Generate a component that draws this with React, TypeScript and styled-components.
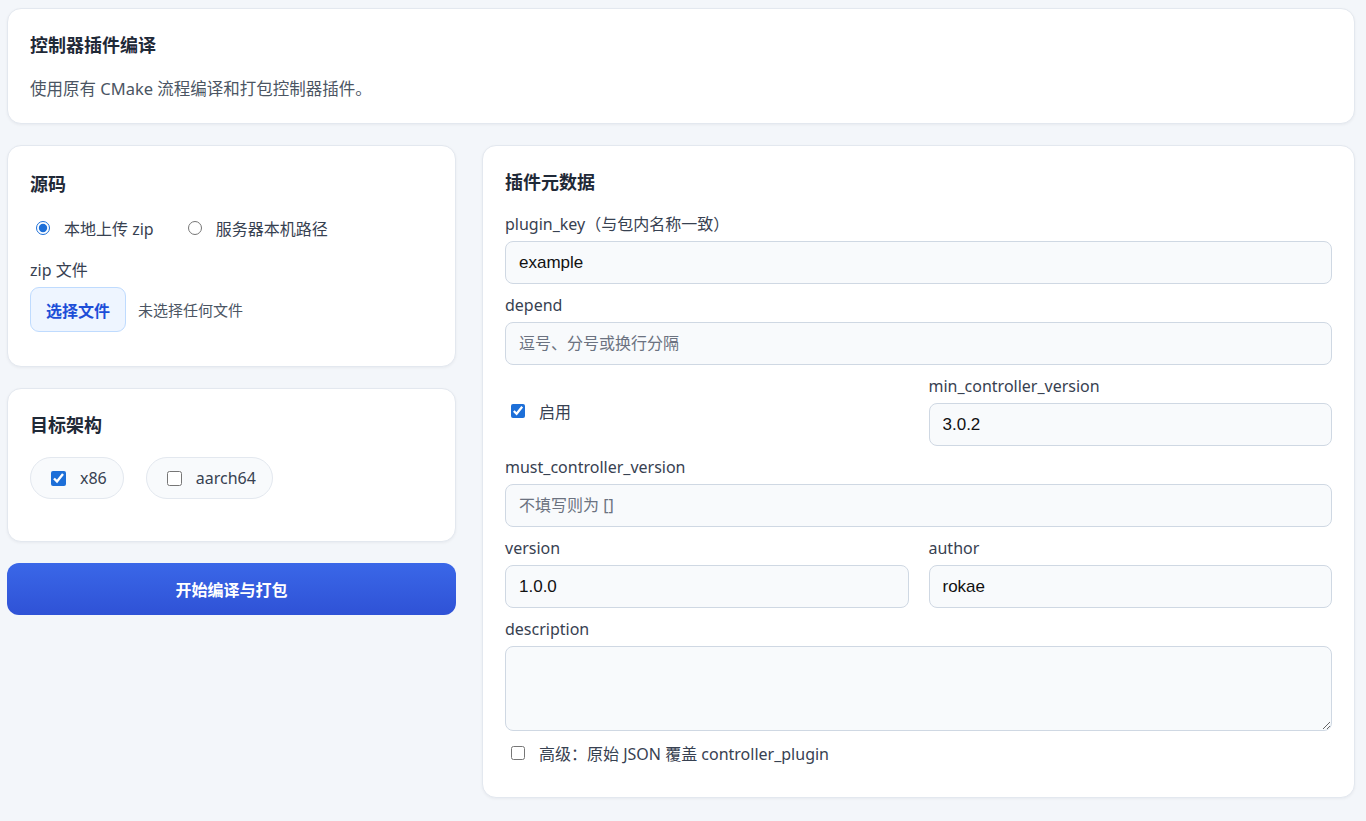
import React from "react";
import styled, { createGlobalStyle } from "styled-components";

const Global = createGlobalStyle`
  body { margin: 0; background: #f3f6fa; font-family: "Noto Sans", "Noto Sans CJK SC", sans-serif; color: #1f2937; }
  * { box-sizing: border-box; }
`;
const Page = styled.div`
  padding: 8px 11px 10px 7px; display: flex; flex-direction: column; gap: 21px; min-height: 821px;
`;
const Card = styled.div<{ $pad?: string }>`
  background: #fff; border: 1px solid #e3e8ef; border-radius: 14px;
  box-shadow: 0 1px 3px rgba(15,23,42,0.05); padding: ${p => p.$pad || "22px"};
`;
const Title = styled.div`
  font-size: 18px; font-weight: 700; color: #1f2937; line-height: 24px;
`;
const Sub = styled.div`
  font-size: 16.5px; color: #4b5563; margin-top: 20px; line-height: 24px;
`;
const Main = styled.div`
  display: grid; grid-template-columns: 449px 1fr; gap: 26px; align-items: start;
`;
const Col = styled.div` display: flex; flex-direction: column; gap: 21px; `;
const Row = styled.div<{ $gap?: number; $mt?: number }>`
  display: flex; align-items: center; gap: ${p => p.$gap ?? 12}px; margin-top: ${p => p.$mt ?? 0}px;
`;
const Opt = styled.label`
  display: flex; align-items: center; gap: 14px; font-size: 16px; color: #374151; padding-left: 6px;
  input { margin: 0; width: 14px; height: 14px; accent-color: #1d6fd8; }
`;
const Label = styled.div<{ $mt?: number }>`
  font-size: 16px; color: #374151; line-height: 21px; margin-bottom: 6px; margin-top: ${p => p.$mt ?? 0}px;
`;
const FileBtn = styled.button`
  height: 45px; padding: 0 15px; border: 1px solid #bfdbfe; background: #eef5ff; color: #1d4ed8;
  border-radius: 9px; font-size: 16px; font-weight: 700; font-family: inherit;
`;
const Muted = styled.span` font-size: 15px; color: #4b5563; `;
const Pill = styled.label`
  display: flex; align-items: center; gap: 14px; height: 42px; padding: 0 16px 0 20px;
  border: 1px solid #e3e8ef; background: #f8fafc; border-radius: 21px; font-size: 16px; color: #374151;
  input { margin: 0; width: 15px; height: 15px; accent-color: #1d6fd8; }
`;
const BigBtn = styled.button`
  height: 52px; border: none; border-radius: 12px; color: #fff; font-size: 16px; font-weight: 700;
  font-family: inherit; background: linear-gradient(#3a67e8, #2f52d6);
`;
const Fields = styled.div` display: flex; flex-direction: column; gap: 11px; margin-top: 20px; `;
const Grid2 = styled.div` display: grid; grid-template-columns: 1fr 1fr; gap: 20px; align-items: center; `;
const Input = styled.input`
  width: 100%; height: 43px; border: 1px solid #cfd8e3; border-radius: 8px; background: #f8fafc;
  padding: 0 13px; font-size: 17px; font-family: "Liberation Sans", Arial, sans-serif; color: #111;
  &::placeholder { color: #6b7280; font-family: "Noto Sans", "Noto Sans CJK SC", sans-serif; font-size: 16px; }
`;
const Area = styled.textarea`
  width: 100%; height: 85px; border: 1px solid #cfd8e3; border-radius: 8px; background: #f8fafc; display: block;
`;
const Check = styled.label`
  display: flex; align-items: center; gap: 14px; font-size: 16px; color: #374151; padding-left: 6px;
  input { margin: 0; width: 14px; height: 14px; accent-color: #1d6fd8; }
`;

export default function App() {
  return (
    <Page>
      <Global />
      <Card $pad="24px 22px 22px">
        <Title>控制器插件编译</Title>
        <Sub>使用原有 CMake 流程编译和打包控制器插件。</Sub>
      </Card>
      <Main>
        <Col>
          <Card $pad="26px 22px 34px">
            <Title>源码</Title>
            <Row $gap={28} $mt={20}>
              <Opt><input type="radio" name="s" defaultChecked />本地上传 zip</Opt>
              <Opt><input type="radio" name="s" />服务器本机路径</Opt>
            </Row>
            <Label $mt={20}>zip 文件</Label>
            <Row>
              <FileBtn>选择文件</FileBtn>
              <Muted>未选择任何文件</Muted>
            </Row>
          </Card>
          <Card $pad="24px 22px 42px">
            <Title>目标架构</Title>
            <Row $gap={22} $mt={20}>
              <Pill><input type="checkbox" defaultChecked />x86</Pill>
              <Pill><input type="checkbox" />aarch64</Pill>
            </Row>
          </Card>
          <BigBtn>开始编译与打包</BigBtn>
        </Col>
        <Card $pad="24px 22px 32px">
          <Title>插件元数据</Title>
          <Fields>
            <div><Label>plugin_key（与包内名称一致）</Label><Input defaultValue="example" /></div>
            <div><Label>depend</Label><Input placeholder="逗号、分号或换行分隔" /></div>
            <Grid2>
              <Check><input type="checkbox" defaultChecked />启用</Check>
              <div><Label>min_controller_version</Label><Input defaultValue="3.0.2" /></div>
            </Grid2>
            <div><Label>must_controller_version</Label><Input placeholder="不填写则为 []" /></div>
            <Grid2>
              <div><Label>version</Label><Input defaultValue="1.0.0" /></div>
              <div><Label>author</Label><Input defaultValue="rokae" /></div>
            </Grid2>
            <div><Label>description</Label><Area /></div>
          </Fields>
          <div style={{ marginTop: 10 }}>
            <Check><input type="checkbox" />高级：原始 JSON 覆盖 controller_plugin</Check>
          </div>
        </Card>
      </Main>
    </Page>
  );
}
